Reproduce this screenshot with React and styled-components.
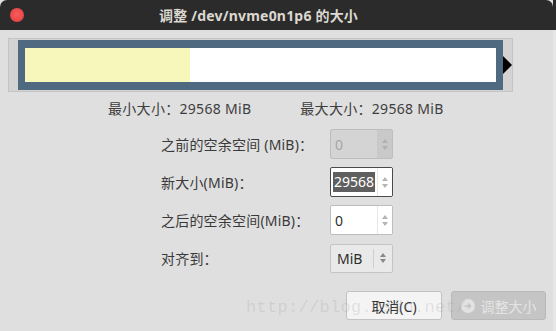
import styled, { createGlobalStyle } from "styled-components";

const Global = createGlobalStyle`
	html, body {
		margin: 0;
		padding: 0;
		background: #e2e2e2;
		font-family: "Noto Sans", "Noto Sans CJK SC", sans-serif;
		overflow: hidden;
	}
`;

const Screen = styled.div`
	display: flex;
	width: 556px;
	height: 331px;
	position: relative;
`;

const Window = styled.div`
	width: 553px;
	height: 331px;
	display: flex;
	flex-direction: column;
	background: #dfdfdf;
	border-radius: 7px 7px 0 0;
	overflow: hidden;
`;

const Edge = styled.div`
	flex: 1;
	background: linear-gradient(#2b2b2b 0 30px, #e6e6e6 30px);
`;

const TitleBar = styled.div`
	height: 30px;
	flex: none;
	background: #2b2b2b;
	display: flex;
	align-items: center;
	padding: 0 10px;
`;

const Close = styled.span`
	width: 14px;
	height: 14px;
	border-radius: 50%;
	background: radial-gradient(circle at 50% 45%, #f65d5d, #e23b3b);
`;

const Title = styled.div`
	flex: 1;
	text-align: center;
	padding-right: 50px;
	color: #dcd8d0;
	font-weight: bold;
	font-size: 14px;
	letter-spacing: 0.2px;
`;

const Body = styled.div`
	flex: 1;
	display: flex;
	flex-direction: column;
	padding: 8px 0 0 8px;
`;

const FrameRow = styled.div`
	display: flex;
	align-items: center;
`;

const Frame = styled.div`
	width: 485px;
	height: 50px;
	padding: 1px 9px 1px 9px;
	border: 1px solid #c4c4c4;
	background: #d3d3d3;
	display: flex;
`;

const Partition = styled.div`
	flex: 1;
	background: #4f6a80;
	padding: 8px 7px;
	display: flex;
`;

const Space = styled.div`
	flex: 1;
	background: #ffffff;
	display: flex;
`;

const Used = styled.div`
	width: 165px;
	background: #f7f7bb;
`;

const Arrow = styled.svg`
	margin-left: -10px;
	width: 9px;
	height: 18px;
`;

const Info = styled.div`
	display: flex;
	gap: 49px;
	padding-left: 100px;
	margin-top: 7px;
	color: #3e3e3e;
	font-size: 14px;
	line-height: 19px;
	letter-spacing: 0.3px;
	white-space: nowrap;
`;

const Form = styled.div`
	display: grid;
	grid-template-columns: 169px 63px;
	grid-auto-rows: 30px;
	row-gap: 8px;
	margin: 11px 0 0 153px;
	align-items: center;
	color: #3a3a3a;
	font-size: 14px;
`;

const Label = styled.div`
	white-space: nowrap;
	letter-spacing: 0.2px;
`;

const Spin = styled.div`
	height: 30px;
	box-sizing: border-box;
	display: flex;
	border: 1px solid ${(p) => (p.$focus ? "#4a4a4a" : "#bdbdbd")};
	border-radius: 2px;
	background: ${(p) => (p.$disabled ? "#d4d4d4" : "#ffffff")};
	overflow: hidden;
`;

const Value = styled.div`
	flex: 1;
	display: flex;
	align-items: center;
	padding-left: ${(p) => (p.$focus ? "2px" : "4px")};
	color: ${(p) => (p.$disabled ? "#a6a6a6" : "#2e2e2e")};
	font-size: 14px;
`;

const Selected = styled.span`
	background: #5f5f5f;
	color: #ffffff;
	font-size: 14px;
	line-height: 20px;
	padding: 0 1px;
`;

const Buttons = styled.div`
	width: 14px;
	flex: none;
	display: flex;
	flex-direction: column;
	align-items: center;
	justify-content: center;
	gap: 3px;
	background: ${(p) => (p.$disabled ? "#c9c9c9" : "#ffffff")};
	border-left: 1px solid ${(p) => (p.$disabled ? "#c9c9c9" : "#e6e6e6")};
`;

const Select = styled.div`
	height: 29px;
	box-sizing: border-box;
	display: flex;
	align-items: center;
	border: 1px solid #c4c4c4;
	border-radius: 2px;
	background: #e9e9e9;
	font-size: 14px;
	color: #2e2e2e;
`;

const SelectText = styled.div`
	flex: 1;
	padding-left: 6px;
	border-right: 1px solid #cfcfcf;
	line-height: 19px;
`;

const SelectArrows = styled.div`
	width: 18px;
	display: flex;
	flex-direction: column;
	align-items: center;
	gap: 2px;
`;

const Footer = styled.div`
	display: flex;
	justify-content: flex-end;
	gap: 9px;
	padding-right: 7px;
	margin-top: 18px;
`;

const Button = styled.div`
	height: 29px;
	box-sizing: border-box;
	width: ${(p) => p.$w}px;
	display: flex;
	align-items: center;
	justify-content: center;
	gap: 6px;
	border: 1px solid ${(p) => (p.$disabled ? "#b9b9b9" : "#c2c2c2")};
	border-radius: 3px;
	background: ${(p) => (p.$disabled ? "#c5c5c5" : "#f4f4f4")};
	color: ${(p) => (p.$disabled ? "#e4e4e4" : "#333333")};
	font-size: 14px;
`;

const Watermark = styled.div`
	position: absolute;
	left: 246px;
	top: 298px;
	font-family: "Liberation Mono", monospace;
	font-size: 17px;
	letter-spacing: 0.3px;
	color: rgba(150, 150, 150, 0.22);
	pointer-events: none;
	white-space: nowrap;
`;

const Tri = ({ up, color = "#a8a8a8" }) => (
	<svg width="6" height="4" viewBox="0 0 6 4">
		<path d={up ? "M0 4 L3 0 L6 4 Z" : "M0 0 L3 4 L6 0 Z"} fill={color} />
	</svg>
);

const SpinBox = ({ value, disabled, focus }) => (
	<Spin $disabled={disabled} $focus={focus}>
		<Value $disabled={disabled} $focus={focus}>
			{focus ? <Selected>{value}</Selected> : value}
		</Value>
		<Buttons $disabled={disabled}>
			<Tri up color={disabled ? "#b0b0b0" : "#b4b4b4"} />
			<Tri color={disabled ? "#b0b0b0" : "#b4b4b4"} />
		</Buttons>
	</Spin>
);

export default function App() {
	return (
		<Screen>
			<Global />
			<Window>
				<TitleBar>
					<Close />
					<Title>调整 /dev/nvme0n1p6 的大小</Title>
				</TitleBar>
				<Body>
					<FrameRow>
						<Frame>
							<Partition>
								<Space>
									<Used />
								</Space>
							</Partition>
						</Frame>
						<Arrow viewBox="0 0 9 18">
							<path d="M0 0 L9 9 L0 18 Z" fill="#000" />
						</Arrow>
					</FrameRow>
					<Info>
						<span>最小大小：29568 MiB</span>
						<span>最大大小：29568 MiB</span>
					</Info>
					<Form>
						<Label>之前的空余空间 (MiB)：</Label>
						<SpinBox value="0" disabled />
						<Label>新大小(MiB)：</Label>
						<SpinBox value="29568" focus />
						<Label>之后的空余空间(MiB)：</Label>
						<SpinBox value="0" />
						<Label>对齐到：</Label>
						<Select>
							<SelectText>MiB</SelectText>
							<SelectArrows>
								<Tri up color="#888" />
								<Tri color="#888" />
							</SelectArrows>
						</Select>
					</Form>
					<Footer>
						<Button $w={96}>取消(C)</Button>
						<Button $w={95} $disabled>
							<svg width="14" height="14" viewBox="0 0 14 14">
								<circle cx="7" cy="7" r="7" fill="#e2e2e2" />
								<path d="M3.5 7 H9.5 M7 4.5 L9.5 7 L7 9.5" stroke="#c5c5c5" strokeWidth="1.6" fill="none" />
							</svg>
							调整大小
						</Button>
					</Footer>
				</Body>
			</Window>
			<Edge />
			<Watermark>http://blog.csdn.net/</Watermark>
		</Screen>
	);
}
